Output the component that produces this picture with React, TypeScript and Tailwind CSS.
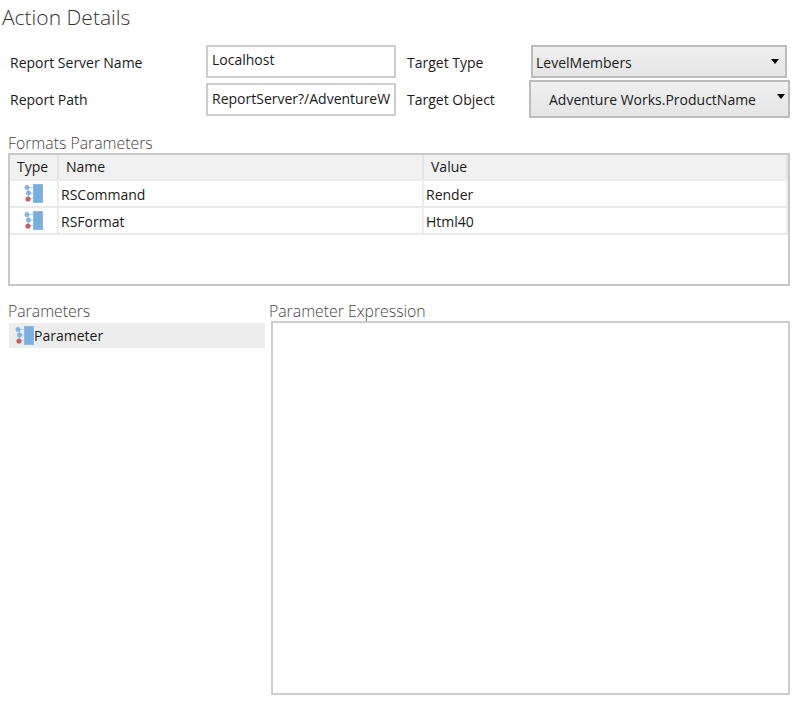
const font = "[font-family:'Open_Sans','Noto_Sans',sans-serif]";

function ParamIcon() {
  return (
    <svg width={19} height={19} viewBox="0 0 19 19" className="shrink-0">
      <rect x="9.5" y="0.5" width="9" height="18" fill="#7aaedd" stroke="#8dbae3" strokeWidth="1" />
      <path d="M3 3.5H9.5M4.5 3.5V9H9.5M4.5 9V14.5H9.5" stroke="#b4d0ea" strokeWidth="1.2" fill="none" />
      <circle cx="3" cy="3.5" r="2.5" fill="#86b4de" />
      <circle cx="4.5" cy="9" r="2.5" fill="#86b4de" />
      <circle cx="4" cy="15" r="2.6" fill="#c06468" />
    </svg>
  );
}

function Caret({ className = "" }: { className?: string }) {
  return <span className={`w-0 h-0 border-x-[4px] border-x-transparent border-t-[5px] border-t-black ${className}`} />;
}

const rows = [
  { name: "RSCommand", value: "Render" },
  { name: "RSFormat", value: "Html40" },
];

export default function App() {
  return (
    <div className={`${font} w-[797px] h-[701px] bg-white text-[14px] text-[#1a1a1a] overflow-hidden`}>
      <h1 className="text-[21px] font-light leading-[26px] pl-[2px] pt-[4px] pb-[1px] text-[#333]">Action Details</h1>

      <div className="flex mt-[14px] h-[73px]">
        <div className="w-[206px] pl-[10px] flex flex-col">
          <div className="h-[35px] flex items-center">Report Server Name</div>
          <div className="h-[38px] flex items-center">Report Path</div>
        </div>
        <div className="w-[190px] flex flex-col gap-[5px]">
          <div className="h-[33px] border-2 border-[#cdcdcd] pl-[4px] pb-[5px] flex items-center">Localhost</div>
          <div className="h-[33px] border-2 border-[#cdcdcd] pl-[4px] pb-[2px] flex items-center overflow-hidden whitespace-nowrap">ReportServer?/AdventureW</div>
        </div>
        <div className="w-[133px] pl-[11px] flex flex-col">
          <div className="h-[35px] flex items-center">Target Type</div>
          <div className="h-[38px] flex items-center">Target Object</div>
        </div>
        <div className="w-[261px] flex flex-col">
          <div className="h-[33px] ml-[2px] mr-[3px] border-2 border-[#bcbcbc] bg-gradient-to-b from-[#f0f0f0] to-[#e5e5e5] pl-[3px] pr-[6px] flex items-center justify-between">
            <span className="pt-[2px]">LevelMembers</span>
            <Caret />
          </div>
          <div className="h-[38px] mt-[2px] border-2 border-[#bcbcbc] bg-gradient-to-b from-[#f0f0f0] to-[#e5e5e5] pl-[18px] pr-[3px] flex items-center justify-between">
            Adventure Works.ProductName
            <Caret className="mb-[6px]" />
          </div>
        </div>
      </div>

      <div className="pl-[8px] pr-[7px] mt-[15px]">
        <div className="text-[15.8px] font-light leading-[20px] text-[#444]">Formats Parameters</div>
        <div className="h-[133px] border-2 border-[#c8c8c8]">
          <div className="flex h-[26px] bg-[#f1f1f1] border-b-2 border-[#ececec]">
            <div className="w-[49px] border-r-2 border-[#e4e4e4] pl-[7px] pb-[2px] flex items-center">Type</div>
            <div className="w-[365px] border-r-2 border-[#e4e4e4] pl-[7px] pb-[2px] flex items-center">Name</div>
            <div className="flex-1 border-r-2 border-[#e4e4e4] pl-[7px] pb-[2px] flex items-center">Value</div>
          </div>
          {rows.map((r) => (
            <div key={r.name} className="flex h-[27px] border-b-2 border-[#e9e9e9]">
              <div className="w-[49px] border-r-2 border-[#ececec] pl-[14px] flex items-center">
                <ParamIcon />
              </div>
              <div className="w-[365px] border-r-2 border-[#ececec] pl-[2px] pt-[2px] flex items-center">{r.name}</div>
              <div className="flex-1 border-r-2 border-[#ececec] pl-[2px] pt-[2px] flex items-center">{r.value}</div>
            </div>
          ))}
        </div>
      </div>

      <div className="flex pl-[8px] pr-[7px] mt-[15px]">
        <div className="w-[257px] shrink-0">
          <div className="text-[15.8px] font-light leading-[20px] text-[#444]">Parameters</div>
          <div className="h-[25px] ml-[1px] mt-[2px] bg-[#ededed] pl-[6px] flex items-center">
            <ParamIcon />
            <span>Parameter</span>
          </div>
        </div>
        <div className="flex-1 pl-[4px]">
          <div className="text-[15.8px] font-light leading-[20px] text-[#444]">Parameter Expression</div>
          <div className="h-[374px] ml-[2px] border-2 border-[#cdcdcd]" />
        </div>
      </div>
    </div>
  );
}
